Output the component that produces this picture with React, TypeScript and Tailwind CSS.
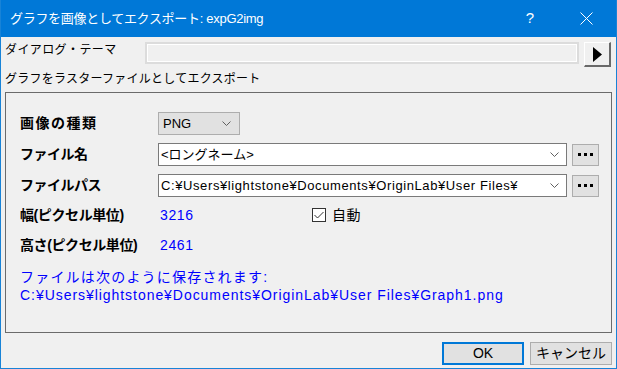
import React from 'react'

const jp = { fontFamily: '"Liberation Sans", "Noto Sans CJK JP", sans-serif' }

function Chevron() {
  return (
    <svg width="9" height="6" viewBox="0 0 9 6" className="shrink-0">
      <path d="M0.5 0.5 L4.5 4.5 L8.5 0.5" fill="none" stroke="#606060" strokeWidth="1" />
    </svg>
  )
}

function DotsButton() {
  return (
    <div className="w-[27px] h-[22px] bg-[#e1e1e1] border border-[#adadad] flex items-center justify-center gap-[3px]">
      <div className="w-[3px] h-[3px] bg-black"></div>
      <div className="w-[3px] h-[3px] bg-black"></div>
      <div className="w-[3px] h-[3px] bg-black"></div>
    </div>
  )
}

export default function App() {
  return (
    <div className="w-[617px] h-[369px] flex flex-col bg-[#f0f0f0] border border-t-0 border-[#1883d7] text-black overflow-hidden" style={jp}>
      {/* タイトルバー */}
      <div className="h-[37px] -mx-px bg-[#0078d7] flex items-center text-white shrink-0">
        <span className="ml-[10px] text-[13px] tracking-[-0.3px]">グラフを画像としてエクスポート: expG2img</span>
        <span className="ml-auto mr-[46px] text-[15px]">?</span>
        <svg width="13" height="13" viewBox="0 0 13 13" className="mr-[24px]">
          <path d="M0.5 0.5 L12.5 12.5 M12.5 0.5 L0.5 12.5" stroke="#fff" strokeWidth="1" />
        </svg>
      </div>

      {/* ダイアログテーマ */}
      <div className="flex items-start mt-[5px] pl-[4px] h-[25px]">
        <span className="w-[140px] text-[12px] tracking-[0.4px] leading-[14px] mt-[1px]">ダイアログ・テーマ</span>
        <div className="w-[434px] h-[22px] border-2 border-[#dcdcdc] shadow-[inset_0_0_0_1px_#ffffff]"></div>
        <div className="ml-[5px] w-[27px] h-[25px] bg-[#f0f0f0] border-t border-l border-white border-b-2 border-r-2 border-b-[#696969] border-r-[#696969] flex items-center justify-center">
          <svg width="9" height="15" viewBox="0 0 9 15">
            <path d="M0 0 L9 7.5 L0 15 Z" fill="#000" />
          </svg>
        </div>
      </div>

      <div className="mt-[3px] pl-[4px] text-[12px] tracking-[0.25px] leading-[18px]">グラフをラスターファイルとしてエクスポート</div>

      {/* グループ */}
      <div className="ml-[4px] mr-[4px] mt-[4px] h-[241px] border border-[#6b6b6b] pl-[14px] pt-[19px] flex flex-col">
        <div className="flex items-center h-[23px]">
          <span className="w-[138px] text-[14px] font-bold tracking-[1.5px]">画像の種類</span>
          <div className="w-[82px] h-[23px] bg-[#e1e1e1] border border-[#adadad] flex items-center pl-[4px] pr-[8px] text-[13px]">
            <span className="flex-1">PNG</span>
            <Chevron />
          </div>
        </div>
        <div className="flex items-center h-[23px] mt-[8px]">
          <span className="w-[138px] text-[14px] font-bold tracking-[-0.5px]">ファイル名</span>
          <div className="w-[409px] h-[23px] bg-white border border-[#7a7a7a] flex items-center pl-[2px] pr-[7px] text-[13px]">
            <span className="flex-1">&lt;ロングネーム&gt;</span>
            <Chevron />
          </div>
          <div className="ml-[5px]">
            <DotsButton />
          </div>
        </div>
        <div className="flex items-center h-[23px] mt-[8px]">
          <span className="w-[138px] text-[14px] font-bold tracking-[-0.5px]">ファイルパス</span>
          <div className="w-[409px] h-[23px] bg-white border border-[#7a7a7a] flex items-center pl-[2px] pr-[7px] text-[13px]">
            <span className="flex-1 tracking-[0.6px]">C:¥Users¥lightstone¥Documents¥OriginLab¥User Files¥</span>
            <Chevron />
          </div>
          <div className="ml-[5px]">
            <DotsButton />
          </div>
        </div>
        <div className="flex items-center h-[20px] mt-[8px]">
          <span className="w-[140px] text-[14px] font-bold tracking-[-0.4px]">幅(ピクセル単位)</span>
          <span className="w-[152px] text-[14px] tracking-[0.6px] text-[#0000ff]">3216</span>
          <div className="w-[14px] h-[14px] bg-white border border-[#333333] flex items-center justify-center">
            <svg width="10" height="8" viewBox="0 0 10 8">
              <path d="M0.5 4 L3.5 7 L9.5 1" fill="none" stroke="#333" strokeWidth="1" />
            </svg>
          </div>
          <span className="ml-[6px] text-[14px] tracking-[0.5px]">自動</span>
        </div>
        <div className="flex items-center h-[20px] mt-[10px]">
          <span className="w-[140px] text-[14px] font-bold tracking-[-0.4px]">高さ(ピクセル単位)</span>
          <span className="text-[14px] tracking-[0.6px] text-[#0000ff]">2461</span>
        </div>
        <div className="mt-[13px] text-[14px] leading-[18px] text-[#0000ff] tracking-[1.2px]">ファイルは次のように保存されます:</div>
        <div className="text-[14px] leading-[18px] text-[#0000ff] tracking-[0.95px]">C:¥Users¥lightstone¥Documents¥OriginLab¥User Files¥Graph1.png</div>
      </div>

      {/* ボタン */}
      <div className="flex justify-end gap-[6px] mt-[9px] mr-[4px]">
        <div className="w-[82px] h-[23px] bg-[#e1e1e1] border-2 border-[#0078d7] flex items-center justify-center text-[14px]">OK</div>
        <div className="w-[82px] h-[23px] bg-[#e1e1e1] border border-[#adadad] flex items-center justify-center text-[14px]">キャンセル</div>
      </div>
    </div>
  )
}
